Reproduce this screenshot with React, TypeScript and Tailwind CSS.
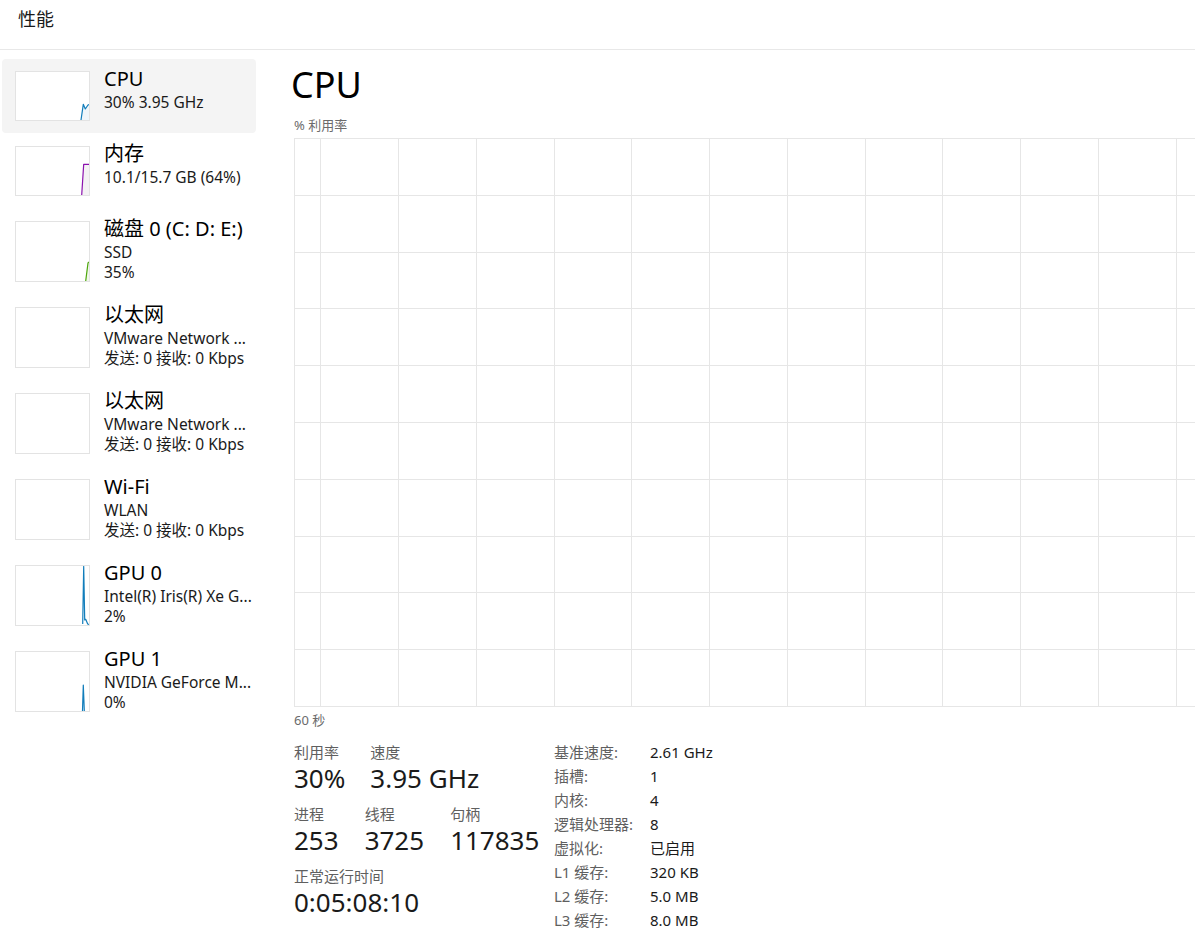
import React from 'react';

type Spark = {
  line: string;
  fill?: string;
  color: string;
  bg?: string;
};

type Device = {
  title: string;
  lines: string[];
  h: number;
  spark?: Spark;
  selected?: boolean;
};

const BLUE = '#117dbb';

const devices: Device[] = [
  {
    title: 'CPU',
    lines: ['30% 3.95 GHz'],
    h: 50,
    selected: true,
    spark: {
      line: '65,48 67.3,32.3 69.3,37 72,33 73,32.5',
      fill: '65,48 67.3,32.3 69.3,37 72,33 73,32.5 73,48',
      color: BLUE,
      bg: '#f1f6fa',
    },
  },
  {
    title: '内存',
    lines: ['10.1/15.7 GB (64%)'],
    h: 50,
    spark: {
      line: '65.7,48 67.7,17.3 73,17.3',
      fill: '65.7,48 67.7,17.3 73,17.3 73,48',
      color: '#8b12ae',
      bg: '#f4f2f4',
    },
  },
  {
    title: '磁盘 0 (C: D: E:)',
    lines: ['SSD', '35%'],
    h: 61,
    spark: {
      line: '69.7,59 72,41 73,40',
      fill: '69.7,59 72,41 73,40 73,59',
      color: '#4da60c',
      bg: '#eff7e9',
    },
  },
  { title: '以太网', lines: ['VMware Network ...', '发送: 0 接收: 0 Kbps'], h: 61 },
  { title: '以太网', lines: ['VMware Network ...', '发送: 0 接收: 0 Kbps'], h: 61 },
  { title: 'Wi-Fi', lines: ['WLAN', '发送: 0 接收: 0 Kbps'], h: 61 },
  {
    title: 'GPU 0',
    lines: ['Intel(R) Iris(R) Xe G...', '2%'],
    h: 61,
    spark: {
      line: '66.7,58 67.7,0.5 68.7,54 69.7,53.3 71.7,58 73,58.5',
      color: BLUE,
    },
  },
  {
    title: 'GPU 1',
    lines: ['NVIDIA GeForce M...', '0%'],
    h: 61,
    spark: {
      line: '66.5,59 67.3,33 68.3,59',
      color: BLUE,
    },
  },
];

const details: [string, string][] = [
  ['基准速度:', '2.61 GHz'],
  ['插槽:', '1'],
  ['内核:', '4'],
  ['逻辑处理器:', '8'],
  ['虚拟化:', '已启用'],
  ['L1 缓存:', '320 KB'],
  ['L2 缓存:', '5.0 MB'],
  ['L3 缓存:', '8.0 MB'],
];

function Thumb({ h, spark }: { h: number; spark?: Spark }) {
  return (
    <div className="w-[75px] shrink-0 border border-[#e3e3e3] bg-white" style={{ height: h }}>
      <svg width="73" height={h - 2} viewBox={`0 0 73 ${h - 2}`} className="block">
        {spark?.fill && <polygon points={spark.fill} fill={spark.bg} />}
        {spark && (
          <polyline points={spark.line} fill="none" stroke={spark.color} strokeWidth="1.2" strokeLinejoin="round" />
        )}
      </svg>
    </div>
  );
}

function Stat({ label, value }: { label: string; value: string }) {
  return (
    <div className="flex flex-col">
      <span className="text-[15px] leading-[20px] text-[#5f5f5f]">{label}</span>
      <span className="mt-[3px] text-[26px] leading-[26px] text-[#1a1a1a]">{value}</span>
    </div>
  );
}

function CpuGraph() {
  const w = 911;
  const h = 569;
  const xs = Array.from({ length: 12 }, (_, k) => Math.round(26.3 + 77.75 * k) + 0.5);
  const ys = Array.from({ length: 11 }, (_, k) => Math.round(56.8 * k) + 0.5);
  return (
    <svg width={w} height={h} className="block" shapeRendering="crispEdges">
      <rect x="0" y="0" width={w} height={h} fill="#ffffff" />
      {xs.map(x => (
        <line key={`x${x}`} x1={x} y1={0} x2={x} y2={h} stroke="#e6e6e6" strokeWidth="1" />
      ))}
      {ys.map(y => (
        <line key={`y${y}`} x1={0} y1={y} x2={w} y2={y} stroke="#e6e6e6" strokeWidth="1" />
      ))}
      <line x1="0.5" y1="0" x2="0.5" y2={h} stroke="#e6e6e6" strokeWidth="1" />
    </svg>
  );
}

export default function App() {
  return (
    <div className="w-[1195px] h-[940px] overflow-hidden bg-white text-[#1a1a1a] font-[family-name:'Noto_Sans','Noto_Sans_CJK_SC',sans-serif]">
      {/* title bar */}
      <header className="h-[50px] border-b border-[#e8e8e8] pl-[18px] pt-[7px]">
        <h1 className="text-[18px] leading-[24px] text-[#1a1a1a]">性能</h1>
      </header>

      <div className="flex">
        {/* device list */}
        <aside className="w-[258px] shrink-0 px-[2px] pt-[9px] flex flex-col gap-[1px]">
          {devices.map((d, i) => (
            <div
              key={i}
              className={`flex items-start gap-[14px] pl-[13px] py-3 rounded-[4px] ${d.selected ? 'bg-[#f4f4f4]' : ''}`}
            >
              <Thumb h={d.h} spark={d.spark} />
              <div className="-mt-[5px] flex flex-col whitespace-nowrap">
                <span className="text-[20px] leading-[25px] text-black">{d.title}</span>
                <div className="mt-[1px] flex flex-col">
                  {d.lines.map((l, j) => (
                    <span key={j} className="text-[15.5px] leading-[20px] text-[#1a1a1a]">
                      {l}
                    </span>
                  ))}
                </div>
              </div>
            </div>
          ))}
        </aside>

        {/* main panel */}
        <main className="flex-1 pl-[36px] pt-[17px]">
          <h2 className="-ml-[3px] text-[36px] leading-[36px] text-black">CPU</h2>
          <div className="mt-[14px] text-[13px] leading-[16px] text-[#6b6b6b]">% 利用率</div>
          <div className="mt-[5px]">
            <CpuGraph />
          </div>
          <div className="mt-[5px] text-[13px] leading-[16px] text-[#6b6b6b]">60 秒</div>

          <div className="mt-[14px] flex">
            <div className="w-[260px] shrink-0 flex flex-col gap-[13px]">
              <div className="flex gap-[25px]">
                <Stat label="利用率" value="30%" />
                <Stat label="速度" value="3.95 GHz" />
              </div>
              <div className="flex gap-[26px]">
                <Stat label="进程" value="253" />
                <Stat label="线程" value="3725" />
                <Stat label="句柄" value="117835" />
              </div>
              <Stat label="正常运行时间" value="0:05:08:10" />
            </div>

            <div className="-mt-[2px] grid grid-cols-[96px_auto] text-[15px] leading-[24px]">
              {details.map(([k, v]) => (
                <React.Fragment key={k}>
                  <span className="text-[#5f5f5f]">{k}</span>
                  <span className="text-[#1a1a1a]">{v}</span>
                </React.Fragment>
              ))}
            </div>
          </div>
        </main>
      </div>
    </div>
  );
}
